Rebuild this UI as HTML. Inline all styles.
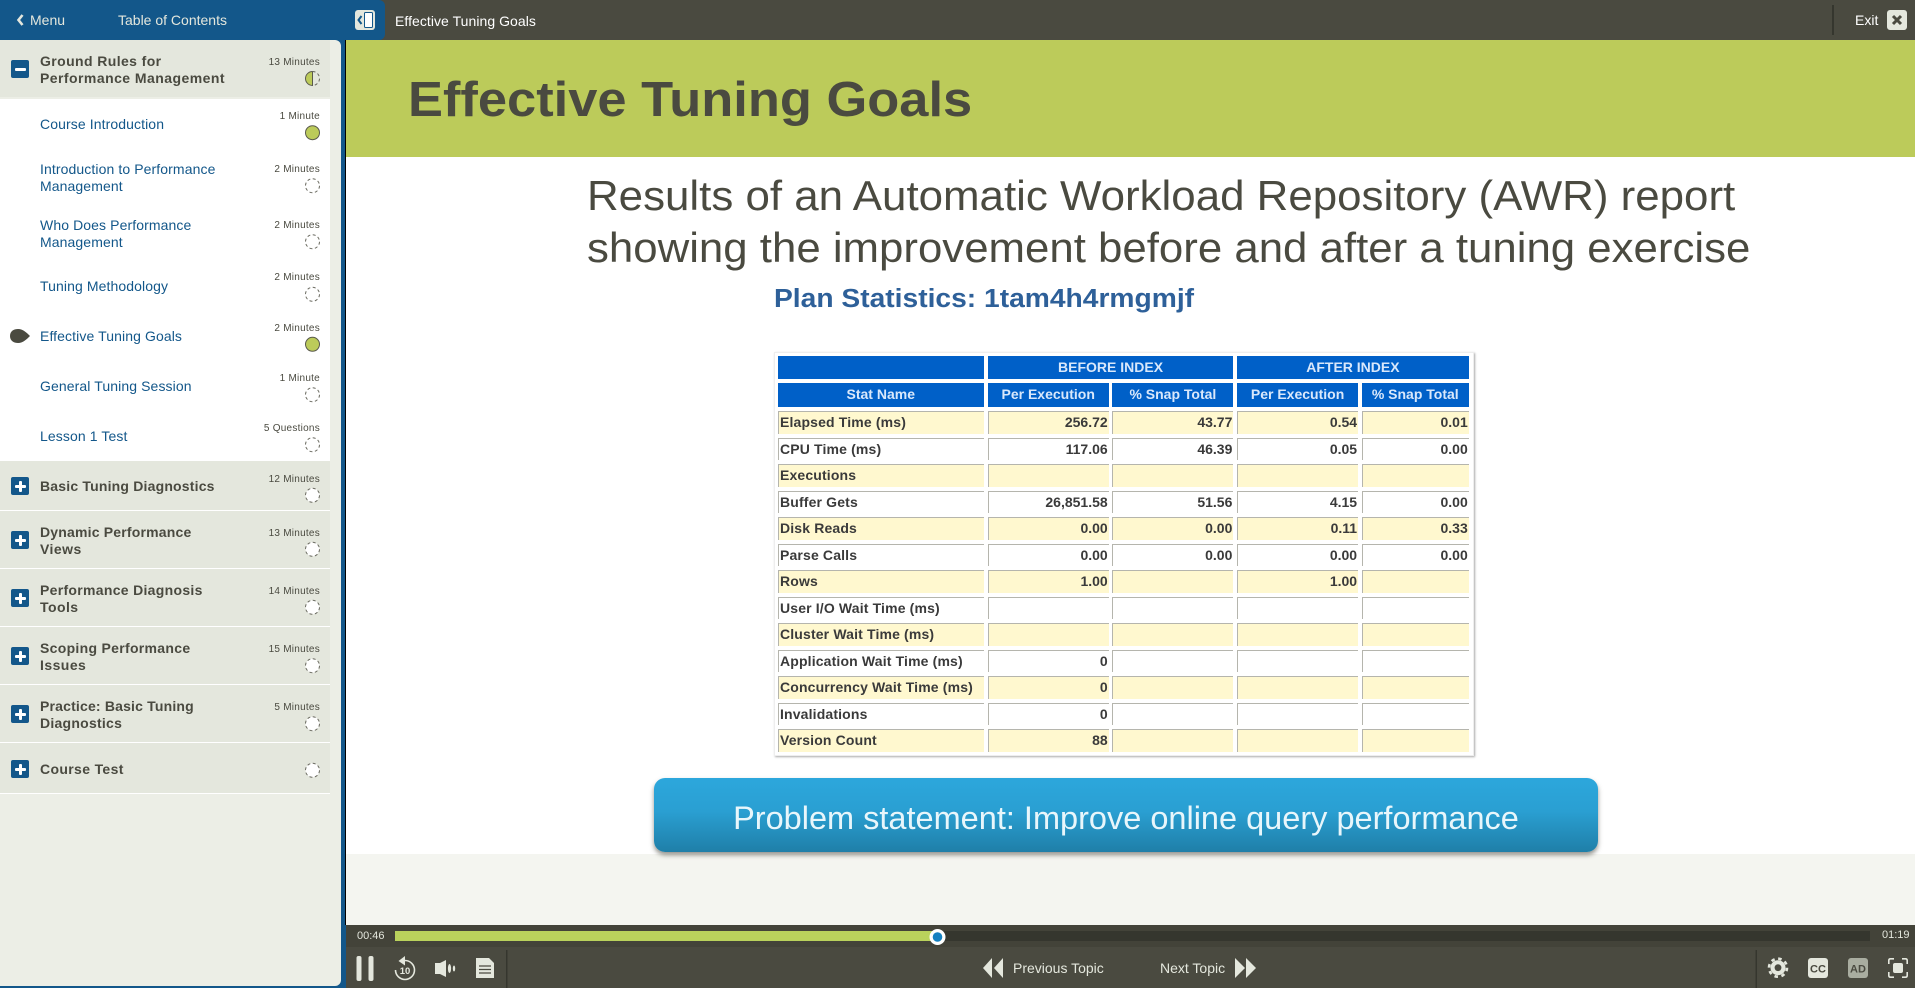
<!DOCTYPE html>
<html lang="en"><head><meta charset="utf-8"><title>Effective Tuning Goals</title>
<style>
*{box-sizing:border-box}
html,body{margin:0;padding:0;width:1915px;height:988px;overflow:hidden;background:#4a4a40;font-family:"Liberation Sans",sans-serif}
.a{position:absolute}
.t{position:absolute;white-space:nowrap;line-height:18px}
.g{position:absolute;left:0;width:330px;background:#e4e7dd}
.gt{color:#4a4a40;font-weight:bold;font-size:14px;letter-spacing:.25px;left:40px}
.it{color:#13578a;font-size:14px;letter-spacing:.1px;left:40px}
.m{color:#4a4a40;font-size:10px;letter-spacing:.25px;right:1595px;text-align:right;margin-top:1px}
.ic{position:absolute;left:11px;width:18px;height:18px;background:#13578a;border-radius:2px}
.ic:before{content:"";position:absolute;left:3.5px;top:7.5px;width:11px;height:3px;background:#fff;border-radius:1px}
.ic.p:after{content:"";position:absolute;left:7.5px;top:3.5px;width:3px;height:11px;background:#fff;border-radius:1px}
.sx{transform-origin:0 50%}
#tb{left:777.5px;top:356px;display:grid;grid-template-columns:206.5px 121px 121px 121px 107px;column-gap:3.7px;row-gap:4px;grid-template-rows:23px 24px repeat(13,22.5px);font-size:14px;color:#3a3a3a;font-weight:bold}
#tb div{padding:0 1px;line-height:23px;box-shadow:inset 1px 1px 0 #b5b5ad;white-space:nowrap;text-align:right}
#tb .y{background:#fff8cf}
#tb .n{background:#fff}
#tb .l{text-align:left;padding-left:2.5px;letter-spacing:.15px}
#tb .h{background:#0060c8;color:#d9e8fb;font-weight:bold;font-size:14px;text-align:center;box-shadow:none;line-height:23px}
#tb .s{grid-column:span 2}
</style></head><body>

<!-- top bar -->
<div class="a" style="left:0;top:0;width:1915px;height:40px;background:#4a4a40"></div>
<div class="a" style="left:0;top:0;width:385px;height:40px;background:#13578a;border-radius:0 6px 6px 0"></div>
<svg class="a" style="left:0;top:0" width="400" height="40"><path d="M22.5 15 L18.5 20 L22.5 25" fill="none" stroke="#e4e7dd" stroke-width="2.6"/><rect x="355" y="10" width="20" height="20" rx="3" fill="#e4e7dd"/><rect x="364.5" y="12.5" width="8" height="15" rx="1" fill="#fff" stroke="#13578a" stroke-width="1"/><path d="M361.5 16 L358.5 20 L361.5 24" fill="none" stroke="#13578a" stroke-width="2"/></svg>
<div class="t" style="left:30px;top:11px;font-size:14px;color:#e4e7dd">Menu</div>
<div class="t" style="left:118px;top:11px;font-size:14px;color:#e4e7dd">Table of Contents</div>
<div class="t" style="left:395px;top:12px;font-size:14px;letter-spacing:.05px;color:#fff">Effective Tuning Goals</div>
<div class="a" style="left:1832px;top:5px;width:2px;height:30px;background:#35362e"></div>
<div class="t" style="left:1855px;top:11px;font-size:14px;color:#fff">Exit</div>
<svg class="a" style="left:1887px;top:10px" width="20" height="20"><rect width="20" height="20" rx="3" fill="#e4e7dd"/><path d="M6 6 L14 14 M14 6 L6 14" stroke="#4a4a40" stroke-width="3"/></svg>

<!-- sidebar -->
<div class="a" style="left:0;top:40px;width:346px;height:948px;background:#13578a"></div>
<div class="a" style="left:345px;top:40px;width:1px;height:885px;background:#000"></div>
<div class="a" style="left:0;top:40px;width:341px;height:946px;background:#eceee6;border-radius:0 6px 6px 0"></div>
<div class="g" style="top:40px;height:57px"></div>
<div class="a" style="left:0;top:99px;width:330px;height:362px;background:#fff"></div>
<div class="g" style="top:461px;height:49px"></div>
<div class="g" style="top:511px;height:57px"></div>
<div class="g" style="top:569px;height:57px"></div>
<div class="g" style="top:627px;height:57px"></div>
<div class="g" style="top:685px;height:57px"></div>
<div class="g" style="top:743px;height:50px"></div>
<div class="a" style="left:0;top:510px;width:330px;height:1px;background:#fff"></div>
<div class="a" style="left:0;top:568px;width:330px;height:1px;background:#fff"></div>
<div class="a" style="left:0;top:626px;width:330px;height:1px;background:#fff"></div>
<div class="a" style="left:0;top:684px;width:330px;height:1px;background:#fff"></div>
<div class="a" style="left:0;top:742px;width:330px;height:1px;background:#fff"></div>
<div class="a" style="left:0;top:793px;width:330px;height:1px;background:#fff"></div>

<div class="ic" style="top:60px"></div>
<div class="ic p" style="top:477px"></div>
<div class="ic p" style="top:531px"></div>
<div class="ic p" style="top:589px"></div>
<div class="ic p" style="top:647px"></div>
<div class="ic p" style="top:705px"></div>
<div class="ic p" style="top:760px"></div>

<div class="t gt" style="top:52px;letter-spacing:.4px">Ground Rules for</div>
<div class="t gt" style="top:69px;letter-spacing:.45px">Performance Management</div>
<div class="t it" style="top:115px">Course Introduction</div>
<div class="t it" style="top:160px">Introduction to Performance</div>
<div class="t it" style="top:177px">Management</div>
<div class="t it" style="top:216px">Who Does Performance</div>
<div class="t it" style="top:233px">Management</div>
<div class="t it" style="top:277px">Tuning Methodology</div>
<div class="t it" style="top:327px">Effective Tuning Goals</div>
<div class="t it" style="top:377px">General Tuning Session</div>
<div class="t it" style="top:427px">Lesson 1 Test</div>
<div class="t gt" style="top:477px;letter-spacing:.19px">Basic Tuning Diagnostics</div>
<div class="t gt" style="top:523px;letter-spacing:.19px">Dynamic Performance</div>
<div class="t gt" style="top:540px;letter-spacing:.45px">Views</div>
<div class="t gt" style="top:581px;letter-spacing:.3px">Performance Diagnosis</div>
<div class="t gt" style="top:598px;letter-spacing:.45px">Tools</div>
<div class="t gt" style="top:639px;letter-spacing:.3px">Scoping Performance</div>
<div class="t gt" style="top:656px;letter-spacing:.45px">Issues</div>
<div class="t gt" style="top:697px;letter-spacing:.18px">Practice: Basic Tuning</div>
<div class="t gt" style="top:714px;letter-spacing:.25px">Diagnostics</div>
<div class="t gt" style="top:760px;letter-spacing:.35px">Course Test</div>

<div class="t m" style="top:53px">13 Minutes</div>
<div class="t m" style="top:107px">1 Minute</div>
<div class="t m" style="top:160px">2 Minutes</div>
<div class="t m" style="top:216px">2 Minutes</div>
<div class="t m" style="top:268px">2 Minutes</div>
<div class="t m" style="top:319px">2 Minutes</div>
<div class="t m" style="top:369px">1 Minute</div>
<div class="t m" style="top:419px">5 Questions</div>
<div class="t m" style="top:470px">12 Minutes</div>
<div class="t m" style="top:524px">13 Minutes</div>
<div class="t m" style="top:582px">14 Minutes</div>
<div class="t m" style="top:640px">15 Minutes</div>
<div class="t m" style="top:698px">5 Minutes</div>

<svg class="a" style="left:0;top:40px" width="340" height="760" viewBox="0 40 340 760">
<path d="M10 336 C10 331 14 329 18 329 C23 329 27 333 30 336 C27 339 23 343 18 343 C14 343 10 341 10 336Z" fill="#4a4a40"/>
<g fill="#bccb5a" stroke="#5a5a4c" stroke-width="1">
<circle cx="312.5" cy="132.7" r="7"/><circle cx="312.5" cy="344.3" r="7"/>
<path d="M312.5 71.5 A7 7 0 0 0 312.5 85.5Z"/></g>
<g fill="none" stroke="#6a6a60" stroke-width="1" stroke-dasharray="3 2.5">
<path d="M312.5 71.5 A7 7 0 0 1 312.5 85.5"/>
<circle cx="312.5" cy="185.7" r="7"/><circle cx="312.5" cy="241.7" r="7"/><circle cx="312.5" cy="294.3" r="7"/><circle cx="312.5" cy="394.7" r="7"/><circle cx="312.5" cy="444.7" r="7"/></g>
<g fill="#fff" stroke="#6a6a60" stroke-width="1" stroke-dasharray="3 2.5">
<circle cx="312.5" cy="495.3" r="7"/><circle cx="312.5" cy="549.3" r="7"/><circle cx="312.5" cy="607.3" r="7"/><circle cx="312.5" cy="665.7" r="7"/><circle cx="312.5" cy="723.7" r="7"/><circle cx="312.5" cy="770.3" r="7"/></g>
</svg>

<!-- slide -->
<div class="a" style="left:346px;top:40px;width:1569px;height:885px;background:#fff;overflow:hidden">
<div class="a" style="left:0;top:0;width:1569px;height:117px;background:#bccb5a"></div>
<div class="a" style="left:0;top:814px;width:1569px;height:71px;background:#f4f5f0"></div>
</div>
<div class="a" style="left:0;top:0;width:1915px;height:925px;filter:blur(.35px);pointer-events:none">
<div class="t sx" style="left:408px;top:70px;font-size:49px;line-height:60px;font-weight:bold;color:#4a4a40;transform:scaleX(1.07)">Effective Tuning Goals</div>
<div class="t sx" style="left:587px;top:172px;font-size:41.5px;line-height:48px;color:#4a4a40;transform:scaleX(1.057)">Results of an Automatic Workload Repository (AWR) report</div>
<div class="t sx" style="left:587px;top:224px;font-size:41.5px;line-height:48px;color:#4a4a40;transform:scaleX(1.055)">showing the improvement before and after a tuning exercise</div>
<div class="t sx" style="left:774px;top:283px;font-size:25.5px;line-height:32px;font-weight:bold;color:#2e6099;transform:scaleX(1.106)">Plan Statistics: 1tam4h4rmgmjf</div>

<div class="a" style="left:774px;top:352px;width:700px;height:404px;background:#fff;box-shadow:1px 1px 2px #aaa;border:1px solid #eee"></div>
<div class="a" id="tb">
<div class="h"></div><div class="h s">BEFORE INDEX</div><div class="h s">AFTER INDEX</div>
<div class="h">Stat Name</div><div class="h">Per Execution</div><div class="h">% Snap Total</div><div class="h">Per Execution</div><div class="h">% Snap Total</div>
<div class="y l">Elapsed Time (ms)</div><div class="y">256.72</div><div class="y">43.77</div><div class="y">0.54</div><div class="y">0.01</div>
<div class="n l">CPU Time (ms)</div><div class="n">117.06</div><div class="n">46.39</div><div class="n">0.05</div><div class="n">0.00</div>
<div class="y l">Executions</div><div class="y"></div><div class="y"></div><div class="y"></div><div class="y"></div>
<div class="n l">Buffer Gets</div><div class="n">26,851.58</div><div class="n">51.56</div><div class="n">4.15</div><div class="n">0.00</div>
<div class="y l">Disk Reads</div><div class="y">0.00</div><div class="y">0.00</div><div class="y">0.11</div><div class="y">0.33</div>
<div class="n l">Parse Calls</div><div class="n">0.00</div><div class="n">0.00</div><div class="n">0.00</div><div class="n">0.00</div>
<div class="y l">Rows</div><div class="y">1.00</div><div class="y"></div><div class="y">1.00</div><div class="y"></div>
<div class="n l">User I/O Wait Time (ms)</div><div class="n"></div><div class="n"></div><div class="n"></div><div class="n"></div>
<div class="y l">Cluster Wait Time (ms)</div><div class="y"></div><div class="y"></div><div class="y"></div><div class="y"></div>
<div class="n l">Application Wait Time (ms)</div><div class="n">0</div><div class="n"></div><div class="n"></div><div class="n"></div>
<div class="y l">Concurrency Wait Time (ms)</div><div class="y">0</div><div class="y"></div><div class="y"></div><div class="y"></div>
<div class="n l">Invalidations</div><div class="n">0</div><div class="n"></div><div class="n"></div><div class="n"></div>
<div class="y l">Version Count</div><div class="y">88</div><div class="y"></div><div class="y"></div><div class="y"></div>
</div>

<div class="a" style="left:654px;top:778px;width:944px;height:74px;border-radius:11px;background:linear-gradient(#2ca7dc 0%,#2a9fd2 45%,#1f7fa8 100%);box-shadow:0 3px 5px rgba(60,60,50,.55)"></div>
<div class="t" style="left:654px;top:798px;width:944px;text-align:center;font-size:32.5px;line-height:40px;color:#e8f6fb">Problem statement: Improve online query performance</div>
</div>

<!-- player -->
<div class="a" style="left:346px;top:925px;width:1569px;height:22px;background:#434339"></div>
<div class="a" style="left:346px;top:947px;width:1569px;height:41px;background:#4a4a40"></div>
<div class="a" style="left:395px;top:931px;width:1475px;height:10px;background:#35362e"></div>
<div class="a" style="left:395px;top:931px;width:542px;height:10px;background:#bad25c"></div>
<div class="t" style="left:357px;top:929px;font-size:11px;line-height:14px;color:#e4e7dd">00:46</div>
<div class="t" style="left:1882px;top:928px;font-size:11px;line-height:14px;color:#e4e7dd">01:19</div>
<svg class="a" style="left:346px;top:925px" width="1569" height="63" viewBox="346 925 1569 63">
<circle cx="937.5" cy="937" r="8" fill="#fff"/><circle cx="937.5" cy="937" r="4.8" fill="#1480c0"/>
<rect x="506" y="950" width="1.5" height="38" fill="#35362e"/>
<rect x="1755.5" y="950" width="1.5" height="38" fill="#35362e"/>
<g fill="#e4e7dd">
<rect x="356.5" y="956" width="5" height="25" rx="2"/><rect x="368.5" y="956" width="5" height="25" rx="2"/>
<path d="M405 956 L398.5 961 L405 965.5Z"/>
<path d="M435 963 H440 L446 960 V977 L440 974 H435Z"/>
<ellipse cx="449.5" cy="968.5" rx="1.6" ry="4.5"/><ellipse cx="454" cy="968.5" rx="1.2" ry="3"/>
<path d="M476 958 H489 L494 963 V978 H476Z"/>
<path d="M983 968 L992 958 V978Z M994 968 L1003 958 V978Z"/>
<path d="M1235 958 L1245 968 L1235 978Z M1246 958 L1256 968 L1246 978Z"/>
<rect x="1808" y="958" width="20" height="20" rx="3"/>
<rect x="1848" y="958" width="20" height="20" rx="3" fill="#a9ada0"/>
<rect x="1893" y="963" width="10" height="10" rx="2"/>
<circle cx="1778" cy="967.7" r="7.5"/>
</g>
<path d="M405 960.5 A9.5 9.5 0 1 1 395.5 970" fill="none" stroke="#e4e7dd" stroke-width="1.6"/>
<g stroke="#4a4a40" stroke-width="1.3"><path d="M479 966 H491 M479 969.5 H491 M479 973 H491"/></g>
<circle cx="1778" cy="967.7" r="9" fill="none" stroke="#e4e7dd" stroke-width="2.6" stroke-dasharray="3.5 3.55"/>
<circle cx="1778" cy="967.7" r="3.4" fill="#4a4a40"/>
<path d="M1888.8 964 V960.5 Q1888.8 958.8 1890.5 958.8 H1894 M1902 958.8 H1905.5 Q1907.2 958.8 1907.2 960.5 V964 M1907.2 972 V975.5 Q1907.2 977.2 1905.5 977.2 H1902 M1894 977.2 H1890.5 Q1888.8 977.2 1888.8 975.5 V972" fill="none" stroke="#e4e7dd" stroke-width="1.6"/>
<text x="405" y="974" text-anchor="middle" font-family="Liberation Sans" font-weight="bold" font-size="9.5" fill="#e4e7dd">10</text>
<text x="1818" y="972.5" text-anchor="middle" font-family="Liberation Sans" font-weight="bold" font-size="11" fill="#4a4a40">CC</text>
<text x="1858" y="972.5" text-anchor="middle" font-family="Liberation Sans" font-weight="bold" font-size="11" fill="#4a4a40">AD</text>
</svg>
<div class="t" style="left:1013px;top:959px;font-size:14px;color:#e4e7dd">Previous Topic</div>
<div class="t" style="left:1160px;top:959px;font-size:14px;color:#e4e7dd">Next Topic</div>
</body></html>
